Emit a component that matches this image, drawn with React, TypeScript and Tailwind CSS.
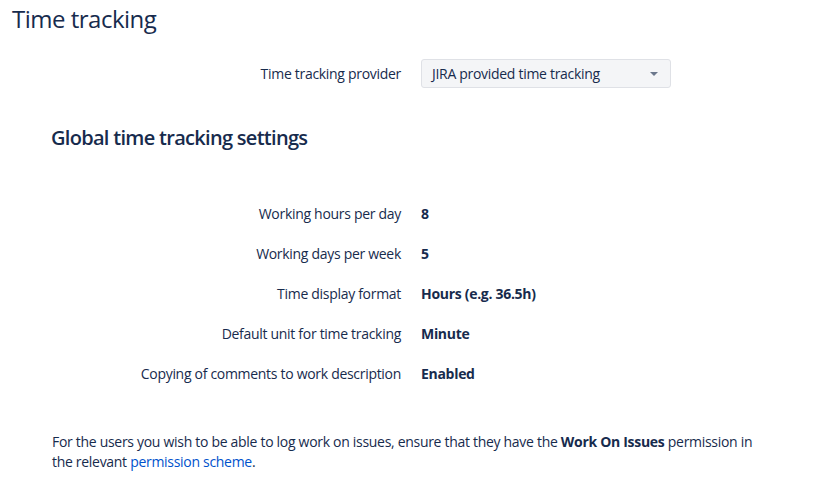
const rows: [string, string][] = [
  ['Working hours per day', '8'],
  ['Working days per week', '5'],
  ['Time display format', 'Hours (e.g. 36.5h)'],
  ['Default unit for time tracking', 'Minute'],
  ['Copying of comments to work description', 'Enabled'],
]

function Row({ label, children }: { label: string; children: React.ReactNode }) {
  return (
    <div className="flex items-center gap-5">
      <div className="w-[389px] text-right text-[#172b4d]">{label}</div>
      <div>{children}</div>
    </div>
  )
}

export default function App() {
  return (
    <div
      className="min-h-screen bg-white px-3 text-[14px] leading-5 tracking-[-0.3px] text-[#172b4d]"
      style={{ fontFamily: '"Segoe UI", "Open Sans", "Noto Sans", sans-serif' }}
    >
      <h1 className="pt-[3px] text-[24px] font-medium leading-8 tracking-[-0.5px]">Time tracking</h1>

      <div className="mt-6">
        <Row label="Time tracking provider">
          <div className="flex h-[29px] w-[250px] items-center justify-between rounded-[3px] border border-[#dfe1e6] bg-[#f4f5f7] pl-[10px] pr-3 text-[#172b4d]">
            <span>JIRA provided time tracking</span>
            <svg width="8" height="4" viewBox="0 0 8 4" className="text-[#6b778c]">
              <path d="M0 0h8L4 4z" fill="currentColor" />
            </svg>
          </div>
        </Row>
      </div>

      <h2 className="ml-[39px] mt-[36px] text-[20px] font-semibold leading-7 tracking-[-0.7px]">
        Global time tracking settings
      </h2>

      <div className="mt-[52px] flex flex-col gap-5">
        {rows.map(([label, value]) => (
          <Row key={label} label={label}>
            <span className="font-bold">{value}</span>
          </Row>
        ))}
      </div>

      <p className="ml-[40px] mt-[48px] w-[720px]">
        For the users you wish to be able to log work on issues, ensure that they have the{' '}
        <b>Work On Issues</b> permission in the relevant{' '}
        <a href="#" className="text-[#0052cc]">permission scheme</a>.
      </p>
    </div>
  )
}
